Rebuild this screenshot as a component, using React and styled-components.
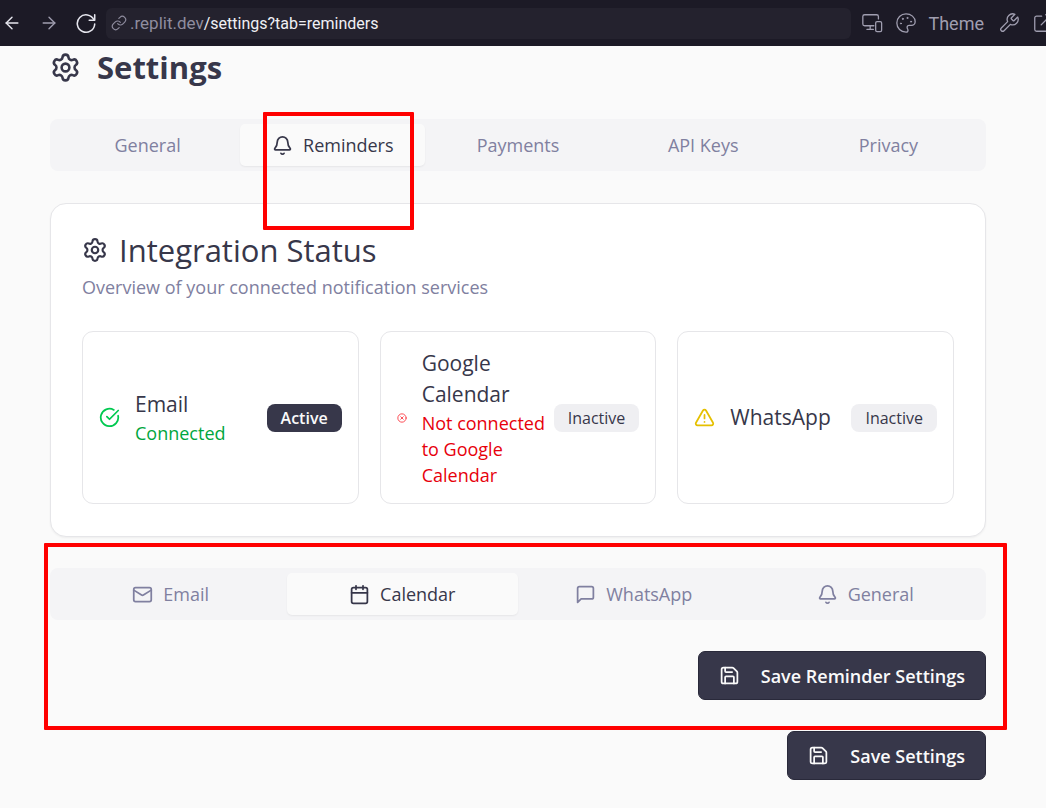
import React from "react";
import styled, { createGlobalStyle } from "styled-components";
import { Settings, Bell, Calendar, Save, CircleCheckBig, CircleX, TriangleAlert, ArrowLeft, ArrowRight } from "lucide-react";

const GlobalStyle = createGlobalStyle`
  *, *::before, *::after { box-sizing: border-box; }
  body {
    margin: 0;
    background: #fafafa;
    color: #37374a;
    font-family: "Open Sans", "Noto Sans", sans-serif;
    font-size: 18px;
    overflow-x: hidden;
  }
  h1, h2, h3, p { margin: 0; }
  button { font: inherit; cursor: pointer; }
  svg { flex: none; }
`;

const TopBar = styled.header`
  display: flex;
  align-items: center;
  height: 46px;
  padding-left: 2px;
  overflow: hidden;
  background: #1c1a26;
  font-family: Roboto, sans-serif;
`;

const BarButton = styled.button`
  display: flex;
  flex: none;
  align-items: center;
  gap: 11px;
  border: 0;
  padding: 0;
  margin-right: ${(p) => p.$gap || 14}px;
  background: none;
  color: ${(p) => (p.$bright ? "#e6e6ee" : "#a09eb0")};
  font-size: 18px;
`;

const Address = styled.button`
  display: flex;
  flex: 1;
  align-items: center;
  gap: 3px;
  height: 31px;
  min-width: 0;
  margin-right: 10px;
  padding: 0 5px;
  border: 0;
  border-radius: 6px;
  background: #24222e;
  color: #f0f0f5;
  font-size: 16px;
  white-space: nowrap;
`;

const Host = styled.span`
  color: #8f8d9f;
  font-size: 17px;
`;

const Page = styled.main`
  padding: 0 60px 28px 50px;
`;

const PageTitle = styled.h1`
  display: flex;
  align-items: center;
  gap: 16px;
  height: 42px;
  margin-bottom: 31px;
  font-size: 31px;
  font-weight: 700;
`;

const TabList = styled.div`
  display: grid;
  grid-auto-flow: column;
  grid-auto-columns: 1fr;
  height: 52px;
  padding: 5px;
  border-radius: 8px;
  background: #f4f4f6;
`;

const TabButton = styled.button`
  position: relative;
  display: flex;
  align-items: center;
  justify-content: center;
  gap: 10px;
  border: 0;
  border-radius: 5px;
  padding: 0;
  font-weight: 500;
  color: ${(p) => (p.$active ? "#37374a" : "#8080a0")};
  background: ${(p) => (p.$active ? "#fafafa" : "transparent")};
  box-shadow: ${(p) => (p.$active ? "0 1px 2px rgba(0, 0, 0, 0.06)" : "none")};
`;

const Card = styled.section`
  margin: 32px 0 31px;
  padding: 25px 31px 32px;
  border: 1px solid #e6e6e9;
  border-radius: 16px;
  background: #fff;
  box-shadow: 0 1px 2px rgba(0, 0, 0, 0.05);
`;

const CardTitle = styled.h2`
  display: flex;
  align-items: center;
  gap: 11px;
  font-size: 31px;
  line-height: 42px;
  font-weight: 500;
`;

const CardText = styled.p`
  margin-bottom: 28px;
  line-height: 32px;
  color: #8080a0;
`;

const StatusGrid = styled.div`
  display: grid;
  grid-template-columns: repeat(3, minmax(0, 1fr));
  gap: 21px;
`;

const StatusCard = styled.article`
  display: flex;
  align-items: center;
  min-height: 173px;
  padding: 15px 16px;
  border: 1px solid #e6e6e9;
  border-radius: 11px;
`;

const StatusText = styled.div`
  flex: 1;
  min-width: 0;
  margin-left: 15px;
`;

const StatusName = styled.h3`
  font-size: 21px;
  line-height: 31px;
  font-weight: 400;
`;

const StatusDetail = styled.p`
  line-height: 26px;
  color: ${(p) => p.$color};
`;

const Badge = styled.span`
  flex: none;
  padding: 0 14px;
  border-radius: 8px;
  font-size: 16px;
  line-height: 28px;
  font-weight: ${(p) => (p.$active ? 600 : 500)};
  color: ${(p) => (p.$active ? "#fafafa" : "#37374a")};
  background: ${(p) => (p.$active ? "#37374a" : "#efeff2")};
`;

const ReminderSection = styled.section`
  position: relative;
  margin-bottom: 31px;
`;

const Actions = styled.div`
  display: flex;
  justify-content: flex-end;
  margin-top: ${(p) => p.$top || 0}px;
`;

const SaveButton = styled.button`
  display: flex;
  align-items: center;
  gap: 21px;
  height: 49px;
  padding: 0 20px;
  border: 1px solid #29293a;
  border-radius: 7px;
  background: #37374a;
  color: #fafafa;
  font-weight: 600;
`;

const Highlight = styled.span`
  position: absolute;
  inset: ${(p) => p.$inset};
  border: 4px solid #ff0000;
  border-radius: 1px;
  pointer-events: none;
`;

const Icon = ({ size = 21, weight = 2, children, color = "currentColor" }) => (
  <svg width={size} height={size} viewBox="0 0 24 24" fill="none" stroke={color} strokeWidth={weight} strokeLinecap="round" strokeLinejoin="round" aria-hidden="true">
    {children}
  </svg>
);

const ReloadIcon = () => (
  <Icon size={22} weight={1.7}>
    <path d="M20.6 8.5A9.5 9.5 0 1 0 21.5 13" />
    <path d="M21.5 3v6h-6" />
  </Icon>
);

const LinkIcon = () => (
  <Icon size={16} weight={1.7} color="#8f8d9f">
    <path d="M10 13a5 5 0 0 0 7.54.54l3-3a5 5 0 0 0-7.07-7.07l-1.72 1.71" />
    <path d="M14 11a5 5 0 0 0-7.54-.54l-3 3a5 5 0 0 0 7.07 7.07l1.71-1.71" />
  </Icon>
);

const DevicesIcon = () => (
  <Icon size={22} weight={1.4}>
    <path d="M14 15H4a2 2 0 0 1-2-2V5a2 2 0 0 1 2-2h13a2 2 0 0 1 2 2v2.500" />
    <path d="M10 15v4M6.500 19h7" />
    <rect x="16" y="10.500" width="6.500" height="11" rx="1.500" />
  </Icon>
);

const PaletteIcon = () => (
  <Icon size={22} weight={1.4}>
    <path d="M12 2a10 10 0 0 0 0 20c1.300 0 2.200-.9 2.200-2.100 0-1.500-1-1.600-1-3a2.300 2.300 0 0 1 2.300-2.300H18a4 4 0 0 0 4-4C22 5.800 17.500 2 12 2z" />
    <g fill="currentColor" strokeWidth="1">
      <circle cx="6.500" cy="12.500" r=".6" />
      <circle cx="8.500" cy="7.500" r=".6" />
      <circle cx="13.500" cy="6.500" r=".6" />
      <circle cx="17.500" cy="10.500" r=".6" />
    </g>
  </Icon>
);

const WrenchIcon = () => (
  <Icon size={22} weight={1.4}>
    <path d="M14.700 6.300a1 1 0 0 0 0 1.400l1.600 1.600a1 1 0 0 0 1.400 0l3.770-3.770a6 6 0 0 1-7.940 7.940l-6.910 6.910a2.120 2.120 0 0 1-3-3l6.910-6.910a6 6 0 0 1 7.940-7.940z" />
  </Icon>
);

const OpenIcon = () => (
  <Icon size={22} weight={1.4}>
    <path d="M18.500 13.500V19a2 2 0 0 1-2 2H5a2 2 0 0 1-2-2V6.500a2 2 0 0 1 2-2h5.500" />
    <path d="M15 3h6v6M10 14 21 3" />
  </Icon>
);

const MailIcon = () => (
  <Icon>
    <rect width="20" height="16" x="2" y="4" rx="2" />
    <path d="m22 7-8.970 5.700a1.940 1.940 0 0 1-2.060 0L2 7" />
  </Icon>
);

const MessageIcon = () => (
  <Icon>
    <path d="M21 15a2 2 0 0 1-2 2H7l-4 4V5a2 2 0 0 1 2-2h14a2 2 0 0 1 2 2z" />
  </Icon>
);

const Tab = ({ icon, label, active, children }) => (
  <TabButton type="button" role="tab" aria-selected={Boolean(active)} $active={active}>
    {icon}
    {label}
    {children}
  </TabButton>
);

const Status = ({ icon, name, detail, color, active }) => (
  <StatusCard>
    {icon}
    <StatusText>
      <StatusName>{name}</StatusName>
      {detail && <StatusDetail $color={color}>{detail}</StatusDetail>}
    </StatusText>
    <Badge $active={active}>{active ? "Active" : "Inactive"}</Badge>
  </StatusCard>
);

export default function App() {
  return (
    <>
      <GlobalStyle />
      <TopBar>
        <BarButton type="button" aria-label="Back" $bright $gap={17}><ArrowLeft size={20} strokeWidth={1.7} /></BarButton>
        <BarButton type="button" aria-label="Forward" $gap={16}><ArrowRight size={20} strokeWidth={1.6} /></BarButton>
        <BarButton type="button" aria-label="Reload" $bright $gap={9}><ReloadIcon /></BarButton>
        <Address type="button">
          <LinkIcon />
          <span><Host>.replit.dev</Host>/settings?tab=reminders</span>
        </Address>
        <BarButton type="button" aria-label="Devices" $gap={12}><DevicesIcon /></BarButton>
        <BarButton type="button"><PaletteIcon />Theme</BarButton>
        <BarButton type="button" aria-label="Developer tools" $gap={12}><WrenchIcon /></BarButton>
        <BarButton type="button" aria-label="Open in new tab" $gap={-8}><OpenIcon /></BarButton>
      </TopBar>
      <Page>
        <PageTitle><Settings size={31} />Settings</PageTitle>
        <TabList role="tablist" aria-label="Settings">
          <Tab label="General" />
          <Tab label="Reminders" icon={<Bell size={21} />} active>
            <Highlight $inset="-12px 11px -64px 23px" />
          </Tab>
          <Tab label="Payments" />
          <Tab label="API Keys" />
          <Tab label="Privacy" />
        </TabList>
        <Card>
          <CardTitle><Settings size={26} />Integration Status</CardTitle>
          <CardText>Overview of your connected notification services</CardText>
          <StatusGrid>
            <Status name="Email" detail="Connected" color="#00a63e" active icon={<CircleCheckBig size={21} color="#00c950" />} />
            <Status name="Google Calendar" detail="Not connected to Google Calendar" color="#e7000b" icon={<CircleX size={10} color="#fb2c36" />} />
            <Status name="WhatsApp" icon={<TriangleAlert size={21} color="#e5c000" />} />
          </StatusGrid>
        </Card>
        <ReminderSection>
          <TabList role="tablist" aria-label="Reminder channels">
            <Tab label="Email" icon={<MailIcon />} />
            <Tab label="Calendar" icon={<Calendar size={21} />} active />
            <Tab label="WhatsApp" icon={<MessageIcon />} />
            <Tab label="General" icon={<Bell size={21} />} />
          </TabList>
          <Actions $top={31}>
            <SaveButton type="button"><Save size={21} />Save Reminder Settings</SaveButton>
          </Actions>
          <Highlight $inset="-25px -21px -30px -6px" />
        </ReminderSection>
        <Actions>
          <SaveButton type="button"><Save size={21} />Save Settings</SaveButton>
        </Actions>
      </Page>
    </>
  );
}
